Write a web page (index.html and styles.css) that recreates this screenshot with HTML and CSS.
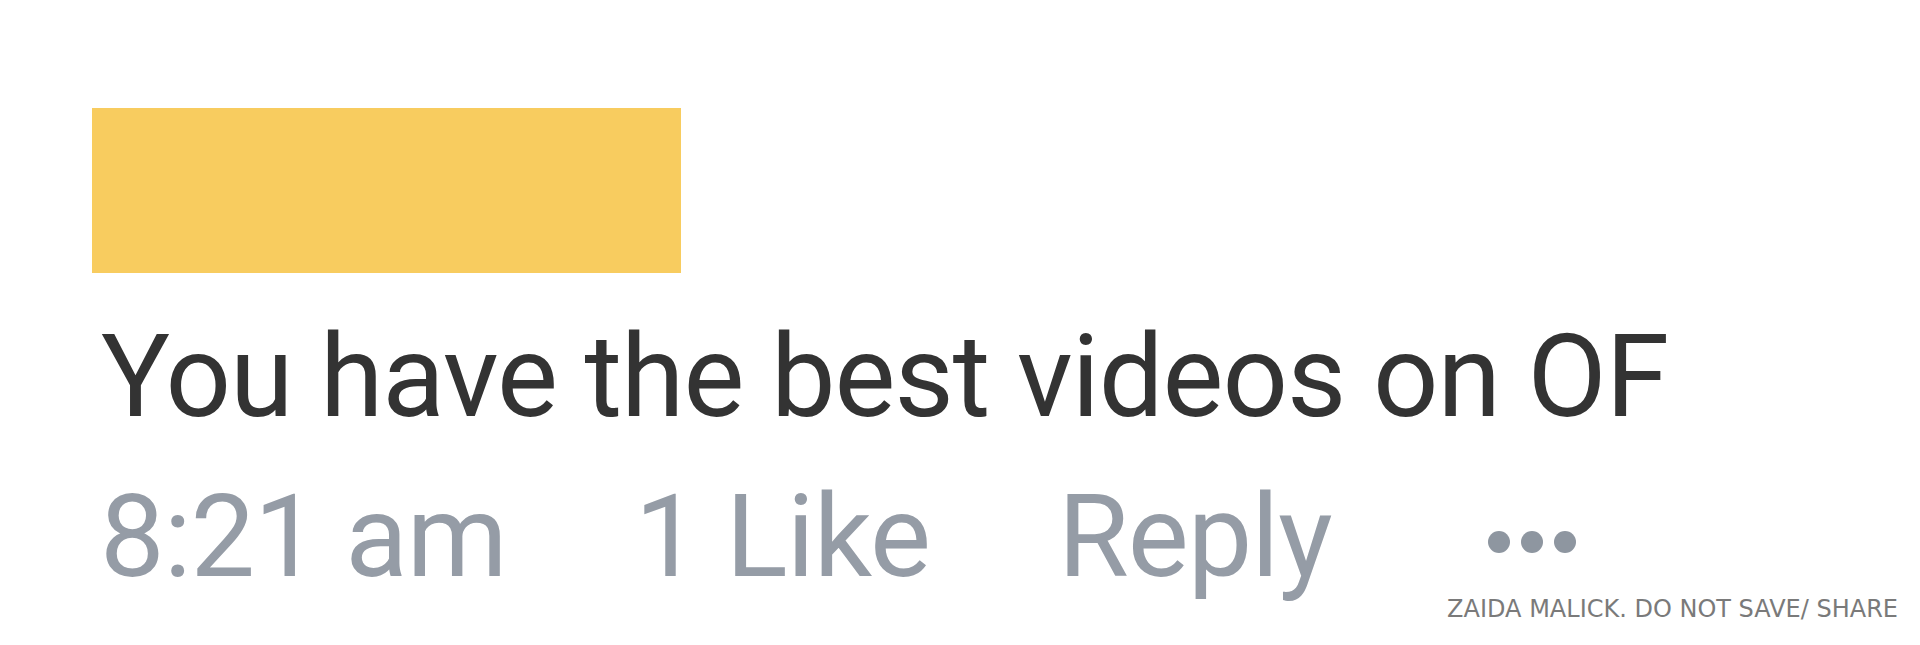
FILE: index.html
```html
<!DOCTYPE html>
<html lang="en">
<head>
    <meta charset="UTF-8">
    <meta name="viewport" content="width=device-width, initial-scale=1.0">
    <title>Comment</title>
    <link rel="stylesheet" href="styles.css">
</head>
<body>
    <div class="comment">
        <!-- hidden name -->
        <div class="name-block"></div>

        <div class="comment-text">You have the best videos on OF</div>

        <div class="comment-meta">
            <span class="time">8:21 am</span>
            <span class="likes">1 Like</span>
            <span class="reply">Reply</span>
            <span class="more"><i></i><i></i><i></i></span>
        </div>
    </div>

    <div class="watermark">ZAIDA MALICK. DO NOT SAVE/ SHARE</div>
</body>
</html>
```

FILE: styles.css
```css
body {
    margin: 0;
    padding: 0;
    background-color: #fff;
    font-family: Roboto, "Liberation Sans", sans-serif;
    height: 645px;
    overflow: hidden;
    position: relative;
}

.comment {
    padding: 108px 0 0 92px;
}

.name-block {
    width: 589px;
    height: 165px;
    background-color: #f8cc5f;
}

.comment-text {
    margin-top: 24px;
    padding-left: 9px;
    font-size: 115px;
    line-height: 160px;
    letter-spacing: -1px;
    color: #333;
}

.comment-meta {
    display: flex;
    align-items: center;
    padding-left: 8px;
    font-size: 115px;
    line-height: 160px;
    letter-spacing: -1px;
    color: #959ca6;
}

.likes {
    margin-left: 128px;
}

.reply {
    margin-left: 128px;
}

.more {
    display: flex;
    gap: 11px;
    margin-left: 156px;
    margin-top: 10px;
}

.more i {
    width: 22px;
    height: 22px;
    border-radius: 50%;
    background-color: #8e96a0;
}

.watermark {
    position: absolute;
    right: 22px;
    bottom: 22px;
    font-family: "DejaVu Sans", sans-serif;
    font-size: 24px;
    color: #7a7a7a;
}
```
